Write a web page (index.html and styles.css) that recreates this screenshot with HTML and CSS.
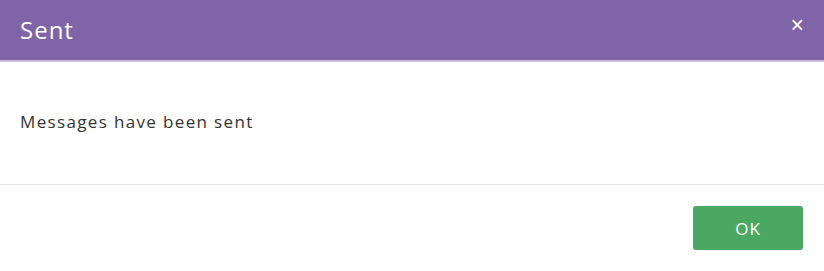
FILE: index.html
```html
<!DOCTYPE html>
<html lang="en">
<head>
  <meta charset="UTF-8" />
  <title>Sent</title>
  <link rel="stylesheet" href="styles.css">
</head>
<body>
  <div class="modal">
    <div class="modal-header">
      <h4 class="modal-title">Sent</h4>
      <button class="close" type="button">&times;</button>
    </div>
    <div class="modal-body">
      <p>Messages have been sent</p>
    </div>
    <div class="modal-footer">
      <button class="btn-ok" type="button">OK</button>
    </div>
  </div>
</body>
</html>
```

FILE: styles.css
```css
* {
  box-sizing: border-box;
}

body {
  margin: 0;
  font-family: 'Open Sans', sans-serif;
  background: #fff;
  color: #333;
}

.modal {
  width: 824px;
  height: 271px;
  background: #fff;
}

.modal-header {
  height: 62px;
  background: #8064a8;
  border-bottom: 2px solid #c7b8e0;
  display: flex;
  align-items: center;
  justify-content: space-between;
  padding: 0 20px;
}

.modal-title {
  margin: 0;
  color: #fff;
  font-size: 24px;
  font-weight: 400;
  letter-spacing: 1px;
  padding-bottom: 2px;
}

.close {
  background: none;
  border: none;
  color: #fff;
  font-size: 23px;
  line-height: 1;
  padding: 0;
  margin-bottom: 10px;
  cursor: pointer;
}

.modal-body {
  height: 123px;
  padding: 0 20px 4px;
  display: flex;
  align-items: center;
  border-bottom: 1px solid #e5e5e5;
}

.modal-body p {
  margin: 0;
  font-size: 17px;
  letter-spacing: 1.35px;
  color: #333;
}

.modal-footer {
  display: flex;
  justify-content: flex-end;
  padding: 21px 21px 0 0;
}

.btn-ok {
  width: 110px;
  height: 44px;
  background: #4aa862;
  color: #fff;
  border: none;
  border-radius: 3px;
  font-family: 'Open Sans', sans-serif;
  font-size: 17px;
  letter-spacing: 1px;
  cursor: pointer;
}
```
